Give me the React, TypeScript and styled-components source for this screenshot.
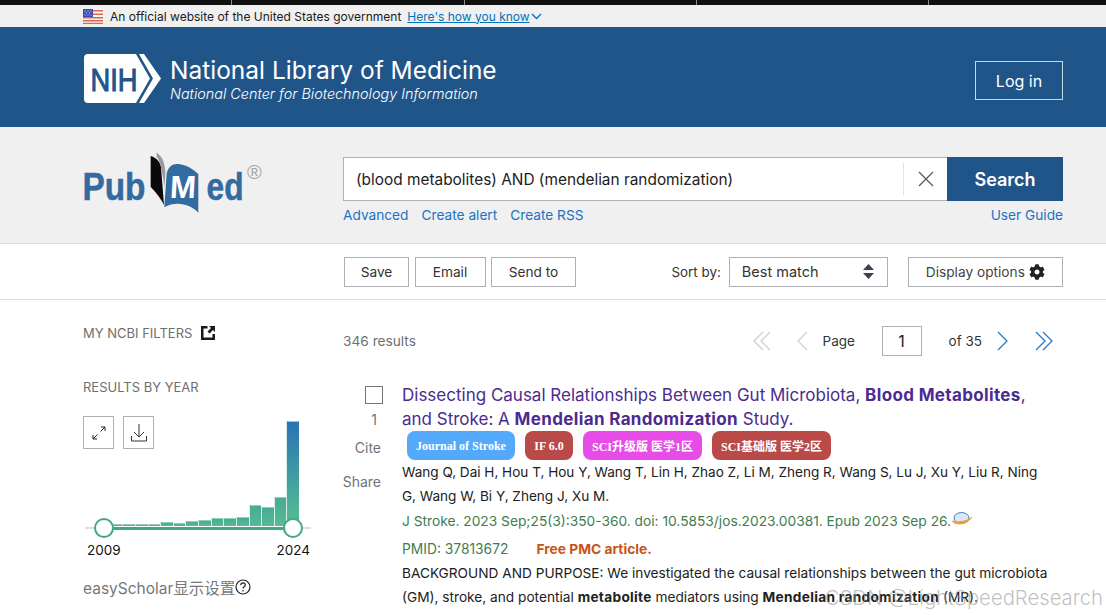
import styled, { createGlobalStyle } from "styled-components";
import { FaCog } from "react-icons/fa";

const yearBars = [2, 2.3, 2.3, 2.3, 2.3, 3.7, 3.3, 5.3, 6.3, 7.7, 7.7, 8.7, 21.3, 18.7, 28.7, 105];

export default function App() {
    return (
        <Page>
            <GlobalStyle/>
            <BlackBar>
                <BlackCell/><BlackCell/><BlackCell/><BlackCell/><BlackCell/>
            </BlackBar>

            <GovBanner>
                <FlagIcon/>
                <span>An official website of the United States government</span>
                <GovLink>Here's how you know</GovLink>
                <svg width="11" height="7" viewBox="0 0 11 7" fill="none" stroke="#0071bc" strokeWidth="1.3">
                    <path d="M1 1l4.5 4.5L10 1"/>
                </svg>
            </GovBanner>

            <NcbiHeader>
                <NihLogo/>
                <NcbiTitles>
                    <NlmTitle>National Library of Medicine</NlmTitle>
                    <NcbiSubtitle>National Center for Biotechnology Information</NcbiSubtitle>
                </NcbiTitles>
                <LoginButton>Log in</LoginButton>
            </NcbiHeader>

            <SearchArea>
                <PubMedLogo/>
                <SearchColumn>
                    <SearchForm>
                        <SearchInput>
                            <QueryText>(blood metabolites) AND (mendelian randomization)</QueryText>
                            <ClearButton>
                                <svg width="16" height="16" viewBox="0 0 16 16" stroke="#555" strokeWidth="1.2">
                                    <path d="M1 1l14 14M15 1L1 15"/>
                                </svg>
                            </ClearButton>
                        </SearchInput>
                        <SearchButton>Search</SearchButton>
                    </SearchForm>
                    <SearchLinks>
                        <BlueLink>Advanced</BlueLink>
                        <BlueLink>Create alert</BlueLink>
                        <BlueLink>Create RSS</BlueLink>
                        <UserGuide>User Guide</UserGuide>
                    </SearchLinks>
                </SearchColumn>
            </SearchArea>

            <Toolbar>
                <ToolButton $width={65}>Save</ToolButton>
                <ToolButton $width={71}>Email</ToolButton>
                <ToolButton $width={85}>Send to</ToolButton>
                <SortLabel>Sort by:</SortLabel>
                <SortSelect>
                    Best match
                    <svg width="11" height="15" viewBox="0 0 11 15" fill="#3a4354">
                        <path d="M5.5 0L11 6H0zM5.5 15L0 9h11z"/>
                    </svg>
                </SortSelect>
                <DisplayButton>Display options <FaCog size={16} color="#222"/></DisplayButton>
            </Toolbar>

            <Content>
                <Sidebar>
                    <SideHeading>
                        MY NCBI FILTERS
                        <svg width="14" height="14" viewBox="0 0 14 14">
                            <path d="M0 0h6.5v2.5H2.5v9h9V8H14v6H0z" fill="#1a1a1a"/>
                            <path d="M8 0h6v6l-2-2-3.5 3.5L6.5 5.5 10 2z" fill="#1a1a1a"/>
                        </svg>
                    </SideHeading>
                    <YearHeading>RESULTS BY YEAR</YearHeading>
                    <Chart>
                        <ChartTools>
                            <ChartTool $width={31}>
                                <svg width="14" height="14" viewBox="0 0 14 14" fill="none" stroke="#222" strokeWidth="1">
                                    <path d="M8.5 5.5L13 1M9 1h4v4M5.5 8.5L1 13M1 9v4h4"/>
                                </svg>
                            </ChartTool>
                            <ChartTool $width={31}>
                                <svg width="16" height="18" viewBox="0 0 16 18" fill="none" stroke="#333" strokeWidth="1">
                                    <path d="M8 0v13M3 8l5 5 5-5M.5 12v5h15v-5"/>
                                </svg>
                            </ChartTool>
                        </ChartTools>
                        <Bars>
                            {yearBars.map((height, i) => (
                                <Bar key={i} $tall={height > 100} style={{height}}/>
                            ))}
                        </Bars>
                        <Slider>
                            <SliderFill/>
                            <SliderHandle $side="left"/>
                            <SliderHandle $side="right"/>
                        </Slider>
                    </Chart>
                    <YearLabels>
                        <span>2009</span>
                        <span>2024</span>
                    </YearLabels>
                    <ScholarSetting>
                        easyScholar显示设置
                        <svg width="16" height="16" viewBox="0 0 16 16" fill="none" stroke="#222" strokeWidth="1.2">
                            <circle cx="8" cy="8" r="7"/>
                            <path d="M5.8 6.2c0-3 4.5-3 4.5-.2 0 1.8-2.3 1.7-2.3 3.6"/>
                            <path d="M8 11v1.5"/>
                        </svg>
                    </ScholarSetting>
                </Sidebar>

                <Results>
                    <ResultsTop>
                        <ResultCount>346 results</ResultCount>
                        <Pager>
                            <PagerIcon $width={18} $gap={26}>
                                <svg width="18" height="20" viewBox="0 0 18 20" fill="none" stroke="#d0d0d0" strokeWidth="1.3">
                                    <path d="M10 1L1 10l9 9M17 1l-9 9 9 9"/>
                                </svg>
                            </PagerIcon>
                            <PagerIcon $width={11} $gap={15}>
                                <svg width="11" height="20" viewBox="0 0 11 20" fill="none" stroke="#d0d0d0" strokeWidth="1.3">
                                    <path d="M10 1L1 10l9 9"/>
                                </svg>
                            </PagerIcon>
                            <PageLabel>Page</PageLabel>
                            <PageInput>1</PageInput>
                            <PageTotal>of 35</PageTotal>
                            <PagerIcon $width={11} $gap={27}>
                                <svg width="11" height="20" viewBox="0 0 11 20" fill="none" stroke="#2a78c8" strokeWidth="1.3">
                                    <path d="M1 1l9 9-9 9"/>
                                </svg>
                            </PagerIcon>
                            <PagerIcon $width={18} $gap={10}>
                                <svg width="18" height="20" viewBox="0 0 18 20" fill="none" stroke="#2a78c8" strokeWidth="1.3">
                                    <path d="M1 1l9 9-9 9M8 1l9 9-9 9"/>
                                </svg>
                            </PagerIcon>
                        </Pager>
                    </ResultsTop>

                    <ResultRow>
                        <ResultActions>
                            <Checkbox/>
                            <ResultNumber>1</ResultNumber>
                            <ActionText>Cite</ActionText>
                            <ActionText>Share</ActionText>
                        </ResultActions>
                        <ResultBody>
                            <ResultTitle>
                                Dissecting Causal Relationships Between Gut Microbiota, <b>Blood Metabolites</b>,<br/>
                                and Stroke: A <b>Mendelian Randomization</b> Study.
                            </ResultTitle>
                            <Badges>
                                <Badge $bg="#55a9fa" $width={108}>Journal of Stroke</Badge>
                                <Badge $bg="#b94a48" $width={48}>IF 6.0</Badge>
                                <Badge $bg="#e74ce8" $width={119}>SCI升级版 医学1区</Badge>
                                <Badge $bg="#b94a48" $width={119}>SCI基础版 医学2区</Badge>
                            </Badges>
                            <Authors>
                                Wang Q, Dai H, Hou T, Hou Y, Wang T, Lin H, Zhao Z, Li M, Zheng R, Wang S, Lu J, Xu Y, Liu R, Ning<br/>
                                G, Wang W, Bi Y, Zheng J, Xu M.
                            </Authors>
                            <Citation>
                                J Stroke. 2023 Sep;25(3):350-360. doi: 10.5853/jos.2023.00381. Epub 2023 Sep 26.
                                <SciIcon/>
                            </Citation>
                            <PmidRow>
                                <span>PMID: 37813672</span>
                                <FreeArticle>Free PMC article.</FreeArticle>
                            </PmidRow>
                            <Abstract>
                                BACKGROUND AND PURPOSE: We investigated the causal relationships between the gut microbiota<br/>
                                (GM), stroke, and potential <b>metabolite</b> mediators using <b>Mendelian randomization</b> (MR).
                            </Abstract>
                        </ResultBody>
                    </ResultRow>
                </Results>
            </Content>

            <Watermark>CSDN @LightSpeedResearch</Watermark>
        </Page>
    )
}

function FlagIcon() {
    return (
        <svg width="20" height="15" viewBox="0 0 20 15">
            <rect width="20" height="15" fill="#f4f4f4"/>
            <path d="M0 1h20v1.5H0zM0 4.5h20V6H0zM0 8h20v1.5H0zM0 11h20v1.5H0zM0 13.8h20V15H0z" fill="#d9694f"/>
            <rect width="10" height="8" fill="#3b4bb5"/>
            <path d="M1.5 2h1M4.5 2h1M7.5 2h1M3 4h1M6 4h1M1.5 6h1M4.5 6h1M7.5 6h1" stroke="#dfe3f5" strokeWidth="1"/>
        </svg>
    )
}

function NihLogo() {
    return (
        <NihSvg width="77" height="49" viewBox="0 0 77 49">
            <path d="M4 0h48l14 24.5L52 49H4a4 4 0 0 1-4-4V4a4 4 0 0 1 4-4z" fill="#fff"/>
            <path d="M55 0h5l17 24.5L60 49h-5l14-24.5z" fill="#fff"/>
            <text x="6.5" y="37" fill="#20558a" fontFamily="'Liberation Sans', sans-serif" fontSize="32" textLength="47" lengthAdjust="spacingAndGlyphs" stroke="#20558a" strokeWidth="1">NIH</text>
        </NihSvg>
    )
}

function PubMedLogo() {
    return (
        <LogoSvg width="190" height="66" viewBox="0 0 190 66">
            <text x="2.5" y="50" fill="#336a9f" stroke="#336a9f" strokeWidth=".5" fontFamily="'Liberation Sans', sans-serif" fontWeight="700" fontSize="38" textLength="63" lengthAdjust="spacingAndGlyphs">Pub</text>
            <text x="126.5" y="50" fill="#336a9f" stroke="#336a9f" strokeWidth=".5" fontFamily="'Liberation Sans', sans-serif" fontWeight="700" fontSize="38" textLength="37" lengthAdjust="spacingAndGlyphs">ed</text>
            <g transform="translate(-20 -20) scale(.3333)">
                <path d="M272 78C285 82 298 90 303 110L312 225C300 200 285 185 272 170Z" fill="#0a0a0a"/>
                <path d="M290 68C305 78 315 95 316 125L314 170L305 120C300 95 295 85 290 80Z" fill="#9a9a9a"/>
                <path d="M313 232L320 130C325 108 340 100 355 102C380 105 400 118 415 132V248C395 225 350 210 313 232Z" fill="#336a9f"/>
            </g>
            <text x="90" y="48" fill="#fff" fontFamily="'Liberation Sans', sans-serif" fontWeight="700" fontSize="32" textLength="26" lengthAdjust="spacingAndGlyphs" transform="skewX(-3) translate(2 0)">M</text>
            <text x="167" y="29" fill="#a5a5a5" fontFamily="'Liberation Sans', sans-serif" fontSize="20">®</text>
        </LogoSvg>
    )
}

function SciIcon() {
    return (
        <SciSvg width="22" height="16" viewBox="0 0 22 16" fill="none">
            <ellipse cx="10.5" cy="6" rx="7.5" ry="5.5" fill="#dbe7f3" stroke="#4a80b8" strokeWidth="1"/>
            <path d="M1 9c3 4 14 5 20-4-3 4-14 6-20 4z" fill="#e8a13a" stroke="#e8a13a"/>
        </SciSvg>
    )
}

const GlobalStyle = createGlobalStyle`
  html, body {
    margin: 0;
    padding: 0;
    background: #fff;
  }

  body {
    font-family: Inter, "Noto Sans CJK SC", sans-serif;
    color: #212121;
  }
`

const Page = styled.div`
  position: relative;
  width: 1106px;
  height: 615px;
  overflow: hidden;
`

const BlackBar = styled.div`
  display: flex;
  height: 5px;
  background: #111;
`

const BlackCell = styled.div`
  flex: none;
  width: 232.3px;
  height: 100%;
  border-right: 1px solid #8a8a8a;
  box-sizing: border-box;

  &:last-child {
    border-right: none;
  }
`

const GovBanner = styled.div`
  display: flex;
  align-items: center;
  height: 22px;
  padding-left: 83px;
  background: #f0f0f0;
  font-size: 12px;
  color: #1b1b1b;

  > span {
    margin-left: 7px;
  }
`

const GovLink = styled.a`
  margin: 0 1px 0 6px;
  color: #0071bc;
  text-decoration: underline;
`

const NcbiHeader = styled.header`
  display: flex;
  align-items: center;
  height: 100px;
  padding: 0 43px 0 84px;
  background: #20558a;
  color: #fff;
`

const NihSvg = styled.svg`
  margin-top: 2px;
`

const NcbiTitles = styled.div`
  margin: 4px 0 0 9px;
  flex: 1;
`

const NlmTitle = styled.div`
  font-size: 24.5px;
  line-height: 30px;
`

const NcbiSubtitle = styled.div`
  font-size: 14.4px;
  font-style: italic;
  font-weight: 300;
  line-height: 18px;
`

const LoginButton = styled.button`
  width: 88px;
  height: 39px;
  margin-top: 7px;
  background: transparent;
  border: 1px solid #c9d6e4;
  color: #fff;
  font: 400 16px Inter, sans-serif;
`

const SearchArea = styled.section`
  display: flex;
  height: 117px;
  padding: 30px 43px 0 80px;
  box-sizing: border-box;
  background: #f0f0f0;
  border-bottom: 1px solid #dcdcdc;
`

const LogoSvg = styled.svg`
  flex: none;
  margin: -7px 73px 0 0;
`

const SearchColumn = styled.div`
  flex: 1;
`

const SearchForm = styled.div`
  display: flex;
  height: 44px;
`

const SearchInput = styled.div`
  flex: 1;
  display: flex;
  align-items: center;
  justify-content: space-between;
  background: #fff;
  border: 1px solid #aeb0b5;
  border-right: none;
  padding-left: 12px;
`

const QueryText = styled.span`
  font-size: 15.4px;
  color: #212121;
`

const ClearButton = styled.div`
  display: flex;
  align-items: center;
  justify-content: center;
  width: 43px;
  height: 32px;
  border-left: 1px solid #e2e2e2;
`

const SearchButton = styled.button`
  width: 116px;
  border: none;
  background: #20558a;
  color: #fff;
  font: 600 18px Inter, sans-serif;
`

const SearchLinks = styled.div`
  display: flex;
  gap: 13px;
  margin-top: 6px;
  font-size: 13.7px;
  line-height: 17px;
`

const BlueLink = styled.a`
  color: #2272c3;
`

const UserGuide = styled(BlueLink)`
  margin-left: auto;
`

const Toolbar = styled.div`
  display: flex;
  align-items: center;
  height: 56px;
  padding-left: 344px;
  box-sizing: border-box;
  border-bottom: 1px solid #dcdcdc;
  font-size: 13.7px;
`

const ToolButton = styled.div<{ $width: number }>`
  display: flex;
  align-items: center;
  justify-content: center;
  width: ${props => props.$width}px;
  height: 30px;
  margin-right: 5.5px;
  box-sizing: border-box;
  border: 1px solid #aeb0b5;
  color: #333;
`

const SortLabel = styled.span`
  margin-left: 90px;
  font-size: 13.4px;
  color: #333;
`

const SortSelect = styled.div`
  display: flex;
  align-items: center;
  justify-content: space-between;
  width: 159px;
  height: 30px;
  margin-left: 8px;
  padding: 0 13px 0 12px;
  box-sizing: border-box;
  border: 1px solid #aeb0b5;
  font-size: 14.5px;
  color: #333;
`

const DisplayButton = styled.div`
  display: flex;
  align-items: center;
  justify-content: center;
  gap: 4px;
  width: 155px;
  height: 30px;
  margin-left: 20px;
  box-sizing: border-box;
  border: 1px solid #aeb0b5;
  color: #444;
`

const Content = styled.main`
  display: flex;
`

const Sidebar = styled.aside`
  width: 228px;
  margin: 0 32px 0 83px;
  flex: none;
`

const SideHeading = styled.div`
  display: flex;
  align-items: center;
  gap: 9px;
  height: 16px;
  margin-top: 25px;
  font-size: 13px;
  color: #6f6f6f;
`

const YearHeading = styled(SideHeading)`
  margin-top: 38px;
`

const Chart = styled.div`
  position: relative;
  display: grid;
  height: 122px;
  margin-top: 21px;
`

const ChartTools = styled.div`
  grid-area: 1 / 1;
  display: flex;
  gap: 9px;
  align-self: start;
`

const ChartTool = styled.div<{ $width: number }>`
  display: flex;
  align-items: center;
  justify-content: center;
  width: ${props => props.$width}px;
  height: 33px;
  box-sizing: border-box;
  border: 1px solid #aeb0b5;
`

const Bars = styled.div`
  grid-area: 1 / 1;
  display: flex;
  align-items: flex-end;
  align-self: end;
  height: 106px;
  margin: 0 12px 12px 14px;
`

const Bar = styled.div<{ $tall?: boolean }>`
  flex: 1;
  box-sizing: border-box;
  border-top: 1px solid #8ed0bb;
  border-left: 1px solid #d8efe7;
  background: ${props => props.$tall ? "linear-gradient(#2a73b5, #4fb696 85%)" : "linear-gradient(#48ab93, #55bb97)"};
`

const Slider = styled.div`
  position: absolute;
  left: 2px;
  right: 0;
  bottom: 9px;
  height: 2px;
  background: #dedede;
`

const SliderFill = styled.div`
  position: absolute;
  left: 19px;
  right: 18px;
  top: 0;
  height: 2.5px;
  background: #45a58c;
`

const SliderHandle = styled.div<{ $side: "left" | "right" }>`
  position: absolute;
  top: -9px;
  ${props => props.$side === "left" ? "left: 9px;" : "right: 8px;"}
  width: 20px;
  height: 20px;
  box-sizing: border-box;
  border: 2.5px solid #45a58c;
  border-radius: 50%;
  background: #fff;
`

const YearLabels = styled.div`
  display: flex;
  justify-content: space-between;
  padding: 0 1px 0 4px;
  font-size: 13.5px;
  line-height: 16px;
  margin-top: 4px;
  color: #111;
`

const ScholarSetting = styled.div`
  display: flex;
  align-items: flex-start;
  margin-top: 21px;
  font-size: 15.5px;
  line-height: 20px;
  color: #777;
`

const Results = styled.div`
  width: 720px;
  flex: none;
`

const ResultsTop = styled.div`
  display: flex;
  align-items: center;
  justify-content: space-between;
  height: 30px;
  margin-top: 26px;
`

const ResultCount = styled.span`
  font-size: 13.7px;
  color: #6f6f6f;
`

const Pager = styled.div`
  display: flex;
  align-items: center;
  font-size: 13.5px;
  padding-right: 10px;
`

const PagerIcon = styled.span<{ $width: number; $gap: number }>`
  display: flex;
  width: ${props => props.$width}px;
  margin-right: ${props => props.$gap}px;

  &:last-child {
    margin-right: 0;
  }
`

const PageLabel = styled.span`
  width: 59px;
  color: #333;
`

const PageInput = styled.div`
  display: flex;
  align-items: center;
  justify-content: center;
  width: 40px;
  height: 30px;
  box-sizing: border-box;
  border: 1px solid #aeb0b5;
  font-size: 16px;
`

const PageTotal = styled.span`
  margin: 0 15px 0 27px;
  color: #333;
`

const ResultRow = styled.article`
  display: flex;
  margin-top: 27px;
`

const ResultActions = styled.div`
  display: flex;
  flex-direction: column;
  align-items: flex-end;
  width: 38px;
  margin-right: 21px;
  padding-top: 3px;
  font-size: 14px;
  color: #6f7378;
`

const Checkbox = styled.div`
  width: 18px;
  height: 18px;
  margin-right: -2px;
  box-sizing: border-box;
  border: 1.5px solid #757575;
`

const ResultNumber = styled.span`
  margin: 7px 4px 0 0;
  line-height: 17px;
`

const ActionText = styled.span`
  margin-top: 11px;
  line-height: 17px;

  & + & {
    margin-top: 17px;
  }
`

const ResultBody = styled.div`
  flex: 1;
`

const ResultTitle = styled.div`
  font-size: 17px;
  line-height: 24px;
  color: #4b2b8f;
  white-space: nowrap;

  b {
    letter-spacing: 0.35px;
  }
`

const Badges = styled.div`
  display: flex;
  gap: 10px;
  padding-left: 5px;
`

const Badge = styled.span<{ $bg: string; $width: number }>`
  display: flex;
  align-items: center;
  justify-content: center;
  width: ${props => props.$width}px;
  height: 29px;
  padding-top: 1px;
  box-sizing: border-box;
  border-radius: 8px;
  background: ${props => props.$bg};
  color: #fff;
  font: 700 12px "Liberation Serif", "Noto Sans CJK SC", serif;
`

const Authors = styled.div`
  font-size: 13.55px;
  line-height: 24px;
  color: #212121;
  white-space: nowrap;
`

const Citation = styled.div`
  margin-top: 1px;
  height: 28px;
  font-size: 13.75px;
  line-height: 24px;
  color: #3f7d4f;
  white-space: nowrap;
`

const SciSvg = styled.svg`
  vertical-align: -2px;
`

const PmidRow = styled.div`
  display: flex;
  gap: 28px;
  font-size: 13.8px;
  line-height: 24px;
  color: #3f7d4f;
`

const FreeArticle = styled.span`
  font-weight: 700;
  color: #c8541a;
`

const Abstract = styled.div`
  font-size: 13.68px;
  line-height: 24px;
  color: #212121;
  white-space: nowrap;

  b {
    letter-spacing: 0.3px;
  }
`

const Watermark = styled.div`
  position: absolute;
  right: 3px;
  bottom: 5px;
  font: 300 20.3px Inter, sans-serif;
  color: rgba(150, 150, 150, 0.6);
`
